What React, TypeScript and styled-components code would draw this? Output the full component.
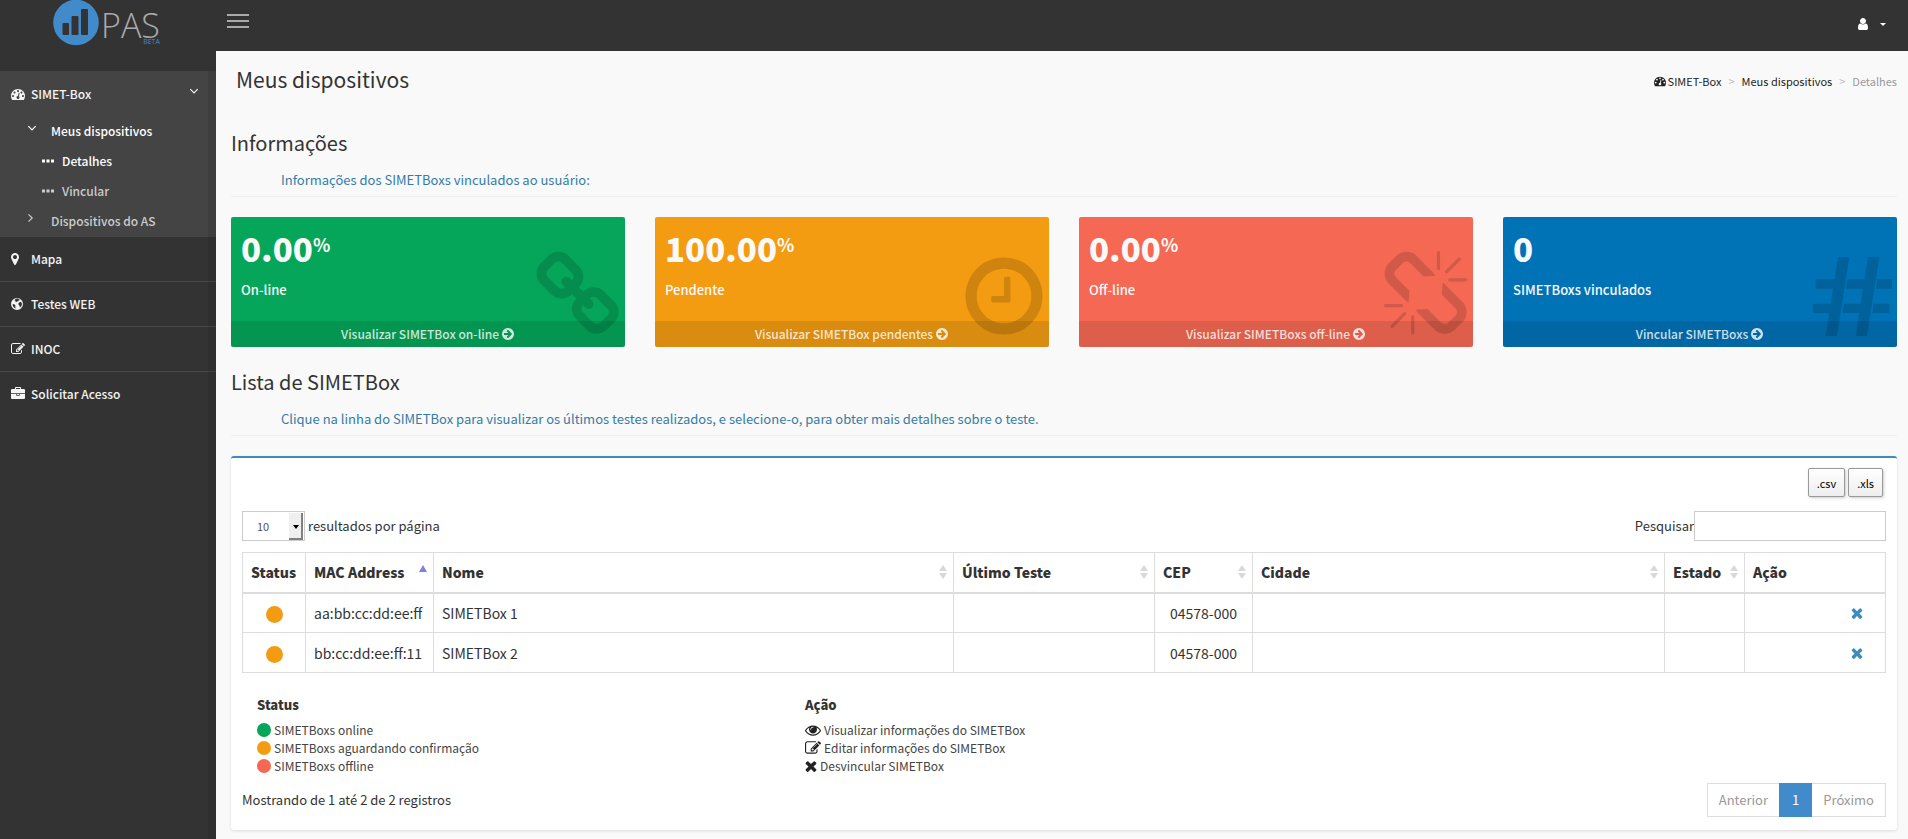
import React, { useState } from 'react';
import styled, { createGlobalStyle, css } from 'styled-components';

const GlobalStyle = createGlobalStyle`
  *, *::before, *::after { box-sizing: border-box; }
  body {
    margin: 0;
    background: #f9f9f9;
    color: #333;
    font-family: "Noto Sans CJK SC", "Noto Sans", sans-serif;
    font-size: 13px;
    line-height: 18px;
  }
  a { color: inherit; text-decoration: none; }
  h1, h2, h3, p, ul, ol { margin: 0; padding: 0; font-weight: 400; }
  ul, ol { list-style: none; }
  button, input, select { font: inherit; color: inherit; }
`;

/* ---------- icons ---------- */

const paths = {
  dashboard:
    'M384 1152q0-53-37.5-90.5t-90.5-37.5-90.5 37.5-37.5 90.5 37.5 90.5 90.5 37.5 90.5-37.5 37.5-90.5zm192-448q0-53-37.5-90.5t-90.5-37.5-90.5 37.5-37.5 90.5 37.5 90.5 90.5 37.5 90.5-37.5 37.5-90.5zm428 481l101-382q6-26-7.5-48.5t-38.5-29.5-48 6.5-30 39.5l-101 382q-60 5-107 43.5t-63 98.5q-20 77 20 146t117 89 146-20 89-117q16-60-6-117t-72-91zm660-33q0-53-37.5-90.5t-90.5-37.5-90.5 37.5-37.5 90.5 37.5 90.5 90.5 37.5 90.5-37.5 37.5-90.5zm-640-640q0-53-37.5-90.5t-90.5-37.5-90.5 37.5-37.5 90.5 37.5 90.5 90.5 37.5 90.5-37.5 37.5-90.5zm448 192q0-53-37.5-90.5t-90.5-37.5-90.5 37.5-37.5 90.5 37.5 90.5 90.5 37.5 90.5-37.5 37.5-90.5zm320 448q0 261-141 483-19 29-54 29h-1402q-35 0-54-29-141-221-141-483 0-182 71-348t191-286 286-191 348-71 348 71 286 191 191 286 71 348z',
  marker:
    'M1152 640q0-106-75-181t-181-75-181 75-75 181 75 181 181 75 181-75 75-181zm256 0q0 109-33 179l-364 774q-16 33-47.5 52t-67.5 19-67.5-19-46.5-52l-365-774q-33-70-33-179 0-212 150-362t362-150 362 150 150 362z',
  globe:
    'M896 128a768 768 0 1 0 0 1536a768 768 0 1 0 0-1536zM700 260l240-60 240 90 60 130-150 30-60 130-140-30-60 110-130-20 20-130-130-60zM330 900l220 40 150 150-30 180 60 200-160-60-180-220zM1180 700l180-80 150 150 20 200-110 260-150 120-50-230-120-120-40-180z',
  edit:
    'M888 1184l116-116-152-152-116 116v56h96v96h56zm440-720q-16-16-33 1l-350 350q-17 17-1 33t33-1l350-350q17-17 1-33zm80 594v190q0 119-84.5 203.5t-203.5 84.5h-832q-119 0-203.5-84.5t-84.5-203.5v-832q0-119 84.5-203.5t203.5-84.5h832q63 0 117 25 15 7 18 23 3 17-9 29l-49 49q-14 14-32 8-23-6-45-6h-832q-66 0-113 47t-47 113v832q0 66 47 113t113 47h832q66 0 113-47t47-113v-126q0-13 9-22l64-64q15-15 35-7t20 29zm-96-738l288 288-672 672h-288v-288zm444 132l-92 92-288-288 92-92q28-28 68-28t68 28l152 152q28 28 28 68t-28 68z',
  briefcase:
    'M640 256h512v-128h-512v128zm1152 640v480q0 66-47 113t-113 47h-1472q-66 0-113-47t-47-113v-480h672v160q0 26 19 45t45 19h320q26 0 45-19t19-45v-160h672zm-768 0v128h-256v-128h256zm768-480v384h-1792v-384q0-66 47-113t113-47h352v-160q0-40 28-68t68-28h576q40 0 68 28t28 68v160h352q66 0 113 47t47 113z',
  user:
    'M1536 1399q0 109-62.5 187t-150.5 78h-854q-88 0-150.5-78t-62.5-187q0-85 8.5-160.5t31.5-152 58.5-131 94-89 134.5-34.5q131 128 313 128t313-128q76 0 134.5 34.5t94 89 58.5 131 31.5 152 8.5 160.5zm-256-887q0 159-112.5 271.5t-271.5 112.5-271.5-112.5-112.5-271.5 112.5-271.5 271.5-112.5 271.5 112.5 112.5 271.5z',
  link:
    'M1520 1216q0-40-28-68l-208-208q-28-28-68-28-42 0-72 32 3 3 19 18.5t21.5 21.5 15 19 13 25.5 3.5 27.5q0 40-28 68t-68 28q-15 0-27.5-3.5t-25.5-13-19-15-21.5-21.5-18.5-19q-33 31-33 73 0 40 28 68l206 207q27 27 68 27 40 0 68-26l147-146q28-28 28-67zm-703-705q0-40-28-68l-206-207q-28-28-68-28-39 0-68 27l-147 146q-28 28-28 67 0 40 28 68l208 208q27 27 68 27 42 0 72-31-3-3-19-18.5t-21.5-21.5-15-19-13-25.5-3.5-27.5q0-40 28-68t68-28q15 0 27.5 3.5t25.5 13 19 15 21.5 21.5 18.5 19q33-31 33-73zm895 705q0 120-85 203l-147 146q-83 83-203 83-121 0-204-85l-206-207q-83-83-83-203 0-123 88-209l-88-88q-86 88-208 88-120 0-204-84l-208-208q-84-84-84-204t85-203l147-146q83-83 203-83 121 0 204 85l206 207q83 83 83 203 0 123-88 209l88 88q86-88 208-88 120 0 204 84l208 208q84 84 84 204z',
  clock:
    'M1024 544v448q0 14-9 23t-23 9h-320q-14 0-23-9t-9-23v-64q0-14 9-23t23-9h224v-352q0-14 9-23t23-9h64q14 0 23 9t9 23zm416 352q0-148-73-273t-198-198-273-73-273 73-198 198-73 273 73 273 198 198 273 73 273-73 198-198 73-273zm224 0q0 209-103 385.5t-279.5 279.5-385.5 103-385.5-103-279.5-279.5-103-385.5 103-385.5 279.5-279.5 385.5-103 385.5 103 279.5 279.5 103 385.5z',
  unlink:
    'M503 1271l-256 256q-10 9-23 9-12 0-23-9-9-10-9-23t9-23l256-256q10-9 23-9t23 9q9 10 9 23t-9 23zm169 41v320q0 14-9 23t-23 9-23-9-9-23v-320q0-14 9-23t23-9 23 9 9 23zm-224-224q0 14-9 23t-23 9h-320q-14 0-23-9t-9-23 9-23 23-9h320q14 0 23 9t9 23zm1264 128q0 120-85 203l-147 146q-83 83-203 83-121 0-204-85l-334-335q-21-21-42-56l239-18 273 274q28 28 68 27.5t68-27.5l147-146q28-28 28-67 0-40-28-68l-274-275 18-239q35 21 56 42l336 336q84 86 84 204zm-617-724l-239 18-273-274q-28-28-68-28-39 0-68 27l-147 146q-28 28-28 67 0 40 28 68l274 274-18 240q-35-21-56-42l-336-336q-84-86-84-204 0-120 85-203l147-146q83-83 203-83 121 0 204 85l334 335q21 21 42 56zm633 84q0 14-9 23t-23 9h-320q-14 0-23-9t-9-23 9-23 23-9h320q14 0 23 9t9 23zm-544-544v320q0 14-9 23t-23 9-23-9-9-23v-320q0-14 9-23t23-9 23 9 9 23zm407 151l-256 256q-11 9-23 9t-23-9q-9-10-9-23t9-23l256-256q10-9 23-9t23 9q9 10 9 23t-9 23z',
  arrow:
    'M1413 896q0-27-18-45l-91-91-362-362q-18-18-45-18t-45 18l-91 91q-18 18-18 45t18 45l189 189h-502q-26 0-45 19t-19 45v128q0 26 19 45t45 19h502l-189 189q-19 19-19 45t19 45l91 91q18 18 45 18t45-18l362-362 91-91q18-18 18-45zm251 0q0 209-103 385.5t-279.5 279.5-385.5 103-385.5-103-279.5-279.5-103-385.5 103-385.5 279.5-279.5 385.5-103 385.5 103 279.5 279.5 103 385.5z',
  eye:
    'M1664 960q-152-236-381-353 61 104 61 225 0 185-131.5 316.5t-316.5 131.5-316.5-131.5-131.5-316.5q0-121 61-225-229 117-381 353 133 205 333.5 326.5t434.5 121.5 434.5-121.5 333.5-326.5zm-720-384q0-20-14-34t-34-14q-125 0-214.5 89.5t-89.5 214.5q0 20 14 34t34 14 34-14 14-34q0-86 61-147t147-61q20 0 34-14t14-34zm848 384q0 34-20 69-140 230-376.5 368.5t-499.5 138.5-499.5-139-376.5-368q-20-35-20-69t20-69q140-229 376.5-368t499.5-139 499.5 139 376.5 368q20 35 20 69z',
  times:
    'M1490 1322q0 40-28 68l-136 136q-28 28-68 28t-68-28l-294-294-294 294q-28 28-68 28t-68-28l-136-136q-28-28-28-68t28-68l294-294-294-294q-28-28-28-68t28-68l136-136q28-28 68-28t68 28l294 294 294-294q28-28 68-28t68 28l136 136q28 28 28 68t-28 68l-294 294 294 294q28 28 28 68z',
  hash:
    'M93 18h34l-37 237h-34zM183 18h34l-37 237h-34zM26 85h67l-4 28H26zM121 85h63l-4 28h-63zM211 85h44v28h-48zM18 158h63l-4 28H18zM110 158h62l-4 28h-62zM200 158h47v28h-51z',
};

type IconName = keyof typeof paths;

const Glyph = styled.svg<{ $size: number; $lift?: boolean }>`
  width: ${(p) => p.$size}px;
  height: ${(p) => p.$size}px;
  flex: none;
  fill: currentColor;
  margin-bottom: ${(p) => (p.$lift ? 6 : 0)}px;
`;

const Icon = ({ name, size = 14, box = '0 0 1792 1792' }: { name: IconName; size?: number; box?: string }) => (
  <Glyph $size={size} viewBox={box} aria-hidden="true">
    <path d={paths[name]} fillRule={name === 'globe' ? 'evenodd' : 'nonzero'} />
  </Glyph>
);

const Chevron = ({ down }: { down?: boolean }) => (
  <Glyph $size={10} $lift viewBox="0 0 10 10" aria-hidden="true">
    <path d={down ? 'M1.300 3.200l3.700 3.700L8.700 3.200' : 'M1.500 1.300L5.200 5L1.500 8.700'} fill="none" stroke="currentColor" strokeWidth="1.200" />
  </Glyph>
);

const Dots = () => (
  <Glyph $size={12} viewBox="0 0 12 12" aria-hidden="true">
    <path d="M0 4.500h3v3h-3zM4.500 4.500h3v3h-3zM9 4.500h3v3h-3z" />
  </Glyph>
);

/* ---------- frame ---------- */

const Page = styled.div`
  display: flex;
  min-height: 100vh;
`;

const Sidebar = styled.aside`
  flex: none;
  width: 216px;
  background: #333;
  color: #f4f4f4;
  font-size: 12px;
  font-weight: 500;
  position: relative;
  &::after {
    content: '';
    position: absolute;
    inset: 71px 0 0 auto;
    width: 8px;
    background: rgba(0, 0, 0, 0.08);
  }
`;

const Brand = styled.a`
  display: flex;
  height: 71px;
  padding-left: 53px;
`;

const BrandName = styled.span`
  position: relative;
  margin-left: 2px;
  font-family: "Open Sans", sans-serif;
  font-weight: 300;
  font-size: 34px;
  line-height: 50px;
  color: #aaa;
`;

const BrandTag = styled.small`
  position: absolute;
  right: 0;
  top: 38px;
  font-size: 7px;
  font-weight: 400;
  line-height: 8px;
  color: #428bca;
`;

const MenuLink = styled.a<{ $divided?: boolean }>`
  display: flex;
  align-items: center;
  gap: 6px;
  height: 45px;
  padding: 0 17px 0 11px;
  border-bottom: 1px solid ${(p) => (p.$divided ? '#484848' : 'transparent')};
`;

const MenuIcon = styled.span`
  display: flex;
  width: 14px;
`;

const Grow = styled.span`
  flex: 1;
`;

const OpenGroup = styled.div`
  background: #444;
  padding: 1px 0;
  ${MenuLink} {
    height: 44px;
  }
`;

const SubLink = styled.a<{ $active?: boolean; $deep?: boolean }>`
  display: flex;
  align-items: center;
  gap: ${(p) => (p.$deep ? 8 : 14)}px;
  height: 30px;
  padding-left: ${(p) => (p.$deep ? 42 : 27)}px;
  color: ${(p) => (p.$active ? '#fff' : '#ccc')};
`;

const Body = styled.div`
  flex: 1;
  min-width: 0;
  display: flex;
  flex-direction: column;
`;

const TopBar = styled.header`
  display: flex;
  justify-content: space-between;
  align-items: flex-start;
  height: 51px;
  padding: 14px 22px 0 11px;
  background: #333;
  color: #fff;
`;

const PlainButton = styled.button`
  display: flex;
  align-items: center;
  gap: 10px;
  padding: 0;
  border: 0;
  background: none;
  cursor: pointer;
`;

const Burger = styled.span`
  width: 22px;
  height: 14px;
  border: solid #aaa;
  border-width: 2px 0;
  display: flex;
  align-items: center;
  &::before {
    content: '';
    width: 22px;
    height: 2px;
    background: #aaa;
  }
`;

const Caret = styled.span`
  border: 3px solid transparent;
  border-top-color: currentColor;
  border-bottom: 0;
`;

const UserSlot = styled.div`
  padding-top: 3px;
`;

const Main = styled.main`
  padding: 15px 11px 8px 15px;
`;

const TitleRow = styled.div`
  display: flex;
  justify-content: space-between;
  align-items: flex-start;
  height: 30px;
  margin-bottom: 32px;
  padding-left: 5px;
`;

const PageTitle = styled.h1`
  font-size: 21px;
  line-height: 26px;
`;

const Crumbs = styled.ol`
  display: flex;
  align-items: center;
  font-size: 11px;
  line-height: 30px;
  color: #222;
  li {
    display: flex;
    align-items: center;
  }
  li + li::before {
    content: '>';
    padding: 0 7px;
    color: #bbb;
  }
  li:last-child {
    color: #999;
  }
  a {
    display: flex;
    align-items: center;
    gap: 2px;
  }
`;

const SectionHead = styled.div`
  border-bottom: 1px solid #eee;
  padding: 0 0 7px;
  margin: 20px 0;
`;

const SectionTitle = styled.h2`
  font-size: 20px;
  line-height: 30px;
`;

const SectionText = styled.p`
  margin-top: 13px;
  padding-left: 50px;
  color: #357ca5;
`;

/* ---------- summary cards ---------- */

const Cards = styled.div`
  display: grid;
  grid-template-columns: repeat(4, 1fr);
  gap: 30px;
`;

const Card = styled.section<{ $color: string }>`
  position: relative;
  display: flex;
  flex-direction: column;
  justify-content: space-between;
  height: 130px;
  overflow: hidden;
  border-radius: 2px;
  background: ${(p) => p.$color};
  color: #f9f9f9;
`;

const CardBody = styled.div`
  padding: 10px 10px 0;
`;

const Figure = styled.p`
  display: flex;
  font-size: 33px;
  line-height: 42px;
  font-weight: 900;
`;

const Unit = styled.span`
  font-size: 18px;
  line-height: 34px;
  font-weight: 700;
`;

const CardLabel = styled.p`
  margin-top: 12px;
  font-weight: 500;
`;

const CardArt = styled.div`
  position: absolute;
  right: 0;
  bottom: 6px;
  display: flex;
  color: rgba(0, 0, 0, 0.15);
`;

const CardLink = styled.a`
  display: flex;
  justify-content: center;
  align-items: center;
  gap: 2px;
  height: 26px;
  background: rgba(0, 0, 0, 0.1);
  color: rgba(255, 255, 255, 0.8);
  font-size: 12px;
  font-weight: 500;
`;

/* ---------- list panel ---------- */

const Panel = styled.section`
  border-top: 2px solid #3c8dbc;
  border-radius: 3px;
  background: #fff;
  box-shadow: 0 1px 3px rgba(0, 0, 0, 0.12);
  padding: 10px 11px 13px;
`;

const Exports = styled.div`
  display: flex;
  justify-content: flex-end;
  gap: 3px;
  padding-right: 3px;
`;

const ExportButton = styled.button`
  height: 29px;
  padding: 0 8px;
  border: 1px solid #999;
  border-radius: 2px;
  background: linear-gradient(#fff, #eee);
  box-shadow: 1px 1px 3px #ccc;
  color: #000;
  font-size: 11px;
`;

const Tools = styled.div`
  display: flex;
  justify-content: space-between;
  align-items: center;
  margin: 14px 0 11px;
`;

const Field = styled.label`
  display: flex;
  align-items: center;
`;

const SelectBox = styled.span`
  position: relative;
  display: flex;
  margin-right: 3px;
  &::before {
    content: '';
    position: absolute;
    top: 2px;
    right: 2px;
    width: 14px;
    height: 27px;
    background: #efefef;
    border: solid #808080;
    border-width: 0 2px 2px 0;
    pointer-events: none;
  }
  &::after {
    content: '';
    position: absolute;
    right: 6px;
    top: 14px;
    border: 3px solid transparent;
    border-top: 4px solid #000;
    border-bottom: 0;
    pointer-events: none;
  }
`;

const controlFrame = css`
  height: 30px;
  border: 1px solid #ccc;
  border-radius: 0;
  background: #fff;
`;

const Select = styled.select`
  ${controlFrame}
  appearance: none;
  width: 63px;
  padding: 0 14px;
  font-size: 11px;
  color: #555;
`;

const SearchInput = styled.input`
  ${controlFrame}
  width: 192px;
  padding: 0 10px;
`;

const Table = styled.table`
  width: 100%;
  table-layout: fixed;
  border-collapse: collapse;
  font-size: 14px;
  line-height: 20px;
`;

const Col = styled.col<{ $width?: string }>`
  width: ${(p) => p.$width ?? 'auto'};
`;

const cellFrame = css`
  height: 40px;
  padding: 0 8px;
  border: 1px solid #ddd;
  white-space: nowrap;
`;

const HeadCell = styled.th`
  ${cellFrame}
  text-align: left;
  font-weight: 900;
  border-bottom-width: 2px;
`;

const HeadInner = styled.span`
  display: flex;
  justify-content: space-between;
  align-items: center;
`;

const Cell = styled.td<{ $align?: 'center' | 'right' }>`
  ${cellFrame}
  text-align: ${(p) => p.$align ?? 'left'};
`;

const Dot = styled.span<{ $color: string; $size: number }>`
  display: inline-block;
  flex: none;
  width: ${(p) => p.$size}px;
  height: ${(p) => p.$size}px;
  border-radius: 50%;
  background: ${(p) => p.$color};
  vertical-align: middle;
`;

const SortSvg = styled.svg<{ $active?: boolean }>`
  width: 8px;
  height: 16px;
  margin-right: -2px;
  fill: ${(p) => (p.$active ? '#8080dd' : '#d8d8d8')};
`;

const RemoveLink = styled.a`
  display: flex;
  justify-content: flex-end;
  padding-right: 12px;
  color: #3c8dbc;
`;

const Legend = styled.div`
  display: grid;
  grid-template-columns: repeat(3, 1fr);
  padding-top: 22px;
`;

const LegendGroup = styled.div`
  padding: 0 15px;
  color: #444;
  font-size: 12px;
`;

const LegendTitle = styled.h3`
  font-size: 13px;
  line-height: 20px;
  font-weight: 900;
  color: #333;
  margin-bottom: 6px;
`;

const LegendItem = styled.li`
  display: flex;
  align-items: center;
  gap: 3px;
  height: 18px;
  svg { color: #222; }
`;

const PanelFoot = styled.div`
  display: flex;
  justify-content: space-between;
  align-items: center;
  margin-top: 8px;
`;

const Pager = styled.nav`
  display: flex;
  border: 1px solid #ddd;
`;

const PageButton = styled.button<{ $active?: boolean }>`
  height: 32px;
  padding: 0 11px;
  border: 0;
  background: ${(p) => (p.$active ? '#428bca' : '#fff')};
  color: ${(p) => (p.$active ? '#fff' : '#999')};
  ${(p) => p.$active && css`margin: -1px 0; padding: 0 13px; height: 34px;`}
`;

/* ---------- data ---------- */

const cards: { value: string; unit?: string; label: string; link: string; color: string; icon: IconName; box?: string }[] = [
  { value: '0.00', unit: '%', label: 'On-line', link: 'Visualizar SIMETBox on-line', color: '#05a65a', icon: 'link', box: '48 0 1792 1792' },
  { value: '100.00', unit: '%', label: 'Pendente', link: 'Visualizar SIMETBox pendentes', color: '#f39c12', icon: 'clock' },
  { value: '0.00', unit: '%', label: 'Off-line', link: 'Visualizar SIMETBoxs off-line', color: '#f56954', icon: 'unlink', box: '48 0 1792 1792' },
  { value: '0', label: 'SIMETBoxs vinculados', link: 'Vincular SIMETBoxs', color: '#0073b7', icon: 'hash', box: '0 0 270 270' },
];

const columns: { name: string; width?: string; sort?: 'asc' | 'none' }[] = [
  { name: 'Status', width: '63px' },
  { name: 'MAC Address', width: '128px', sort: 'asc' },
  { name: 'Nome', sort: 'none' },
  { name: 'Último Teste', width: '201px', sort: 'none' },
  { name: 'CEP', width: '98px', sort: 'none' },
  { name: 'Cidade', width: '412px', sort: 'none' },
  { name: 'Estado', width: '80px', sort: 'none' },
  { name: 'Ação', width: '141px' },
];

const devices = [
  { mac: 'aa:bb:cc:dd:ee:ff', name: 'SIMETBox 1', cep: '04578-000' },
  { mac: 'bb:cc:dd:ee:ff:11', name: 'SIMETBox 2', cep: '04578-000' },
];

const statusLegend = [
  { color: '#05a65a', text: 'SIMETBoxs online' },
  { color: '#f39c12', text: 'SIMETBoxs aguardando confirmação' },
  { color: '#f56954', text: 'SIMETBoxs offline' },
];

const actionLegend: { icon: IconName; size: number; box?: string; text: string }[] = [
  { icon: 'eye', size: 16, text: 'Visualizar informações do SIMETBox' },
  { icon: 'edit', size: 16, text: 'Editar informações do SIMETBox' },
  { icon: 'times', size: 12, box: '240 240 1312 1312', text: 'Desvincular SIMETBox' },
];

const menu: { icon: IconName; text: string }[] = [
  { icon: 'marker', text: 'Mapa' },
  { icon: 'globe', text: 'Testes WEB' },
  { icon: 'edit', text: 'INOC' },
  { icon: 'briefcase', text: 'Solicitar Acesso' },
];

const menuBox: Partial<Record<IconName, string>> = {
  marker: '384 0 1792 1792',
  globe: '128 0 1792 1792',
};

const SortMark = ({ active }: { active?: boolean }) => (
  <SortSvg $active={active} viewBox="0 0 8 16" aria-hidden="true">
    <path d={active ? 'M0 8L4 1L8 8z' : 'M0 7L4 1L8 7zM0 9h8L4 15z'} />
  </SortSvg>
);

export default function App() {
  const [query, setQuery] = useState('');
  const rows = devices.filter((d) => `${d.mac} ${d.name} ${d.cep}`.toLowerCase().includes(query.toLowerCase()));

  return (
    <Page>
      <GlobalStyle />
      <Sidebar>
        <Brand href="#" aria-label="PAS">
          <svg width="46" height="46" viewBox="0 0 46 46" aria-hidden="true">
            <circle cx="23" cy="22.500" r="22.800" fill="#428bca" />
            <g fill="#333">
              <rect x="9.500" y="23" width="6.500" height="12" rx="1" />
              <rect x="18.500" y="16" width="7" height="19" rx="1" />
              <rect x="28" y="9" width="7" height="26" rx="1" />
            </g>
          </svg>
          <BrandName>
            PAS
            <BrandTag>BETA</BrandTag>
          </BrandName>
        </Brand>
        <nav>
          <OpenGroup>
            <MenuLink href="#">
              <MenuIcon><Icon name="dashboard" /></MenuIcon>
              SIMET-Box
              <Grow />
              <Chevron down />
            </MenuLink>
            <SubLink href="#" $active><Chevron down />Meus dispositivos</SubLink>
            <SubLink href="#" $active $deep><Dots />Detalhes</SubLink>
            <SubLink href="#" $deep><Dots />Vincular</SubLink>
            <SubLink href="#"><Chevron />Dispositivos do AS</SubLink>
          </OpenGroup>
          {menu.map((m, i) => (
            <MenuLink key={m.text} href="#" $divided={i < menu.length - 1}>
              <MenuIcon><Icon name={m.icon} box={menuBox[m.icon]} /></MenuIcon>
              {m.text}
            </MenuLink>
          ))}
        </nav>
      </Sidebar>

      <Body>
        <TopBar>
          <PlainButton aria-label="Menu"><Burger /></PlainButton>
          <UserSlot>
            <PlainButton aria-label="Usuário"><Icon name="user" /><Caret /></PlainButton>
          </UserSlot>
        </TopBar>

        <Main>
          <TitleRow>
            <PageTitle>Meus dispositivos</PageTitle>
            <Crumbs>
              <li><a href="#"><Icon name="dashboard" size={12} />SIMET-Box</a></li>
              <li><a href="#">Meus dispositivos</a></li>
              <li>Detalhes</li>
            </Crumbs>
          </TitleRow>

          <SectionHead>
            <SectionTitle>Informações</SectionTitle>
            <SectionText>Informações dos SIMETBoxs vinculados ao usuário:</SectionText>
          </SectionHead>

          <Cards>
            {cards.map((c) => (
              <Card key={c.label} $color={c.color}>
                <CardBody>
                  <Figure>{c.value}{c.unit && <Unit>{c.unit}</Unit>}</Figure>
                  <CardLabel>{c.label}</CardLabel>
                </CardBody>
                <CardLink href="#">{c.link}<Icon name="arrow" /></CardLink>
                <CardArt><Icon name={c.icon} size={90} box={c.box} /></CardArt>
              </Card>
            ))}
          </Cards>

          <SectionHead>
            <SectionTitle>Lista de SIMETBox</SectionTitle>
            <SectionText>
              Clique na linha do SIMETBox para visualizar os últimos testes realizados, e selecione-o, para obter mais detalhes sobre o teste.
            </SectionText>
          </SectionHead>

          <Panel>
            <Exports>
              <ExportButton>.csv</ExportButton>
              <ExportButton>.xls</ExportButton>
            </Exports>
            <Tools>
              <Field>
                <SelectBox>
                  <Select defaultValue="10">
                    <option>10</option>
                    <option>25</option>
                    <option>50</option>
                  </Select>
                </SelectBox>
                resultados por página
              </Field>
              <Field>
                Pesquisar
                <SearchInput type="search" value={query} onChange={(e) => setQuery(e.target.value)} />
              </Field>
            </Tools>

            <Table>
              <colgroup>
                {columns.map((c) => <Col key={c.name} $width={c.width} />)}
              </colgroup>
              <thead>
                <tr>
                  {columns.map((c) => (
                    <HeadCell key={c.name} scope="col">
                      <HeadInner>
                        {c.name}
                        {c.sort && <SortMark active={c.sort === 'asc'} />}
                      </HeadInner>
                    </HeadCell>
                  ))}
                </tr>
              </thead>
              <tbody>
                {rows.map((d) => (
                  <tr key={d.mac}>
                    <Cell $align="center"><Dot $color="#f39c12" $size={17} /></Cell>
                    <Cell>{d.mac}</Cell>
                    <Cell>{d.name}</Cell>
                    <Cell />
                    <Cell $align="center">{d.cep}</Cell>
                    <Cell />
                    <Cell />
                    <Cell $align="right">
                      <RemoveLink href="#" aria-label={`Desvincular ${d.name}`}><Icon name="times" size={16} /></RemoveLink>
                    </Cell>
                  </tr>
                ))}
              </tbody>
            </Table>

            <Legend>
              <LegendGroup>
                <LegendTitle>Status</LegendTitle>
                <ul>
                  {statusLegend.map((s) => (
                    <LegendItem key={s.text}><Dot $color={s.color} $size={14} />{s.text}</LegendItem>
                  ))}
                </ul>
              </LegendGroup>
              <LegendGroup>
                <LegendTitle>Ação</LegendTitle>
                <ul>
                  {actionLegend.map((a) => (
                    <LegendItem key={a.text}><Icon name={a.icon} size={a.size} box={a.box} />{a.text}</LegendItem>
                  ))}
                </ul>
              </LegendGroup>
            </Legend>

            <PanelFoot>
              <p>Mostrando de 1 até 2 de 2 registros</p>
              <Pager aria-label="Páginas">
                <PageButton>Anterior</PageButton>
                <PageButton $active>1</PageButton>
                <PageButton>Próximo</PageButton>
              </Pager>
            </PanelFoot>
          </Panel>
        </Main>
      </Body>
    </Page>
  );
}
